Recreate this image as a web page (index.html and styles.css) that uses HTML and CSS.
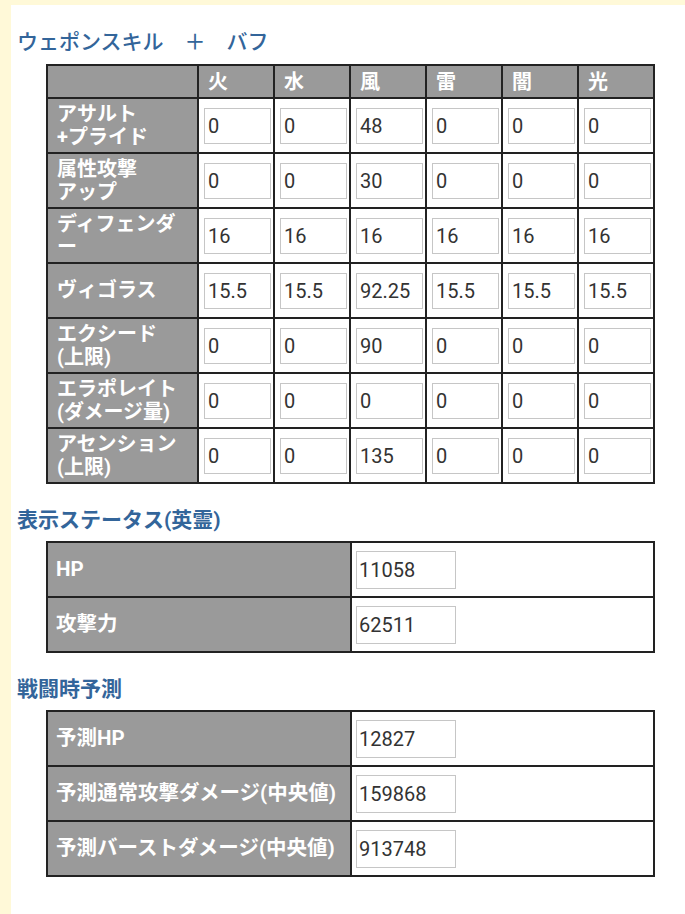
FILE: index.html
```html
<!DOCTYPE html>
<html lang="ja">
<head>
<meta charset="utf-8">
<title>計算</title>
<link rel="stylesheet" href="styles.css">
</head>
<body>
<div class="page">
  <h2 class="heading heading-light">ウェポンスキル　＋　バフ</h2>
  <table class="grid">
    <colgroup><col class="col-label"><col><col><col><col><col><col></colgroup>
    <tr class="head-row">
      <th></th><th>火</th><th>水</th><th>風</th><th>雷</th><th>闇</th><th>光</th>
    </tr>
    <tr>
      <th>アサルト<br>+プライド</th>
      <td><input class="cell-input" value="0"></td><td><input class="cell-input" value="0"></td><td><input class="cell-input" value="48"></td><td><input class="cell-input" value="0"></td><td><input class="cell-input" value="0"></td><td><input class="cell-input" value="0"></td>
    </tr>
    <tr>
      <th>属性攻撃<br>アップ</th>
      <td><input class="cell-input" value="0"></td><td><input class="cell-input" value="0"></td><td><input class="cell-input" value="30"></td><td><input class="cell-input" value="0"></td><td><input class="cell-input" value="0"></td><td><input class="cell-input" value="0"></td>
    </tr>
    <tr>
      <th>ディフェンダ<br>ー</th>
      <td><input class="cell-input" value="16"></td><td><input class="cell-input" value="16"></td><td><input class="cell-input" value="16"></td><td><input class="cell-input" value="16"></td><td><input class="cell-input" value="16"></td><td><input class="cell-input" value="16"></td>
    </tr>
    <tr>
      <th>ヴィゴラス</th>
      <td><input class="cell-input" value="15.5"></td><td><input class="cell-input" value="15.5"></td><td><input class="cell-input" value="92.25"></td><td><input class="cell-input" value="15.5"></td><td><input class="cell-input" value="15.5"></td><td><input class="cell-input" value="15.5"></td>
    </tr>
    <tr>
      <th>エクシード<br>(上限)</th>
      <td><input class="cell-input" value="0"></td><td><input class="cell-input" value="0"></td><td><input class="cell-input" value="90"></td><td><input class="cell-input" value="0"></td><td><input class="cell-input" value="0"></td><td><input class="cell-input" value="0"></td>
    </tr>
    <tr>
      <th>エラポレイト<br>(ダメージ量)</th>
      <td><input class="cell-input" value="0"></td><td><input class="cell-input" value="0"></td><td><input class="cell-input" value="0"></td><td><input class="cell-input" value="0"></td><td><input class="cell-input" value="0"></td><td><input class="cell-input" value="0"></td>
    </tr>
    <tr>
      <th>アセンション<br>(上限)</th>
      <td><input class="cell-input" value="0"></td><td><input class="cell-input" value="0"></td><td><input class="cell-input" value="135"></td><td><input class="cell-input" value="0"></td><td><input class="cell-input" value="0"></td><td><input class="cell-input" value="0"></td>
    </tr>
  </table>

  <h2 class="heading">表示ステータス(英霊)</h2>
  <table class="pairs">
    <tr><th>HP</th><td><input class="wide-input" value="11058"></td></tr>
    <tr><th>攻撃力</th><td><input class="wide-input" value="62511"></td></tr>
  </table>

  <h2 class="heading">戦闘時予測</h2>
  <table class="pairs">
    <tr><th>予測HP</th><td><input class="wide-input" value="12827"></td></tr>
    <tr><th>予測通常攻撃ダメージ(中央値)</th><td><input class="wide-input" value="159868"></td></tr>
    <tr><th>予測バーストダメージ(中央値)</th><td><input class="wide-input" value="913748"></td></tr>
  </table>
</div>
</body>
</html>
```

FILE: styles.css
```css
html, body {
  margin: 0;
  padding: 0;
}
body {
  background: #fff9d8;
  font-family: Roboto, "Noto Sans CJK JP", sans-serif;
  color: #333;
}
.page {
  margin: 5px 0 0 11px;
  background: #fff;
  min-height: 909px;
  padding: 22px 0 0 6px;
  box-sizing: border-box;
}
.heading {
  margin: 0 0 6px 0;
  font-size: 21px;
  line-height: 30px;
  font-weight: 700;
  color: #33659a;
}
.heading-light {
  font-weight: 500;
  margin-bottom: 7px;
}
table {
  border-collapse: collapse;
  margin: 0 0 21px 29px;
  border: 2px solid #222;
  table-layout: fixed;
}
th, td {
  border: 2px solid #222;
  padding: 0;
}
th {
  background: #9a9a9a;
  color: #fff;
  font-weight: 700;
  font-size: 20px;
  line-height: 23px;
  text-align: left;
  padding: 0 9px;
  vertical-align: middle;
}
.grid {
  width: 609px;
}
.grid .col-label {
  width: 151px;
}
.grid tr {
  height: 55px;
}
.grid .head-row {
  height: 33px;
}
.grid .head-row th {
  padding-left: 9px;
  line-height: 24px;
}
.grid td {
  padding: 0 2px 0 5px;
}
.cell-input {
  display: block;
  width: 67px;
  height: 36px;
  box-sizing: border-box;
  border: 1px solid #c6c6c6;
  padding: 0 0 0 3px;
  margin: 0;
  font-family: Roboto, "Noto Sans CJK JP", sans-serif;
  font-size: 20px;
  color: #333;
  background: #fff;
  outline: none;
}
.pairs {
  width: 609px;
}
.pairs tr {
  height: 55px;
}
.pairs th {
  width: 286px;
  padding: 0 8px;
  font-size: 20.5px;
}
.pairs td {
  padding: 0 0 0 4px;
}
.wide-input {
  display: block;
  width: 100px;
  height: 38px;
  box-sizing: border-box;
  border: 1px solid #c6c6c6;
  padding: 0 0 0 2px;
  margin: 0;
  font-family: Roboto, "Noto Sans CJK JP", sans-serif;
  font-size: 20px;
  color: #333;
  background: #fff;
  outline: none;
}
```
